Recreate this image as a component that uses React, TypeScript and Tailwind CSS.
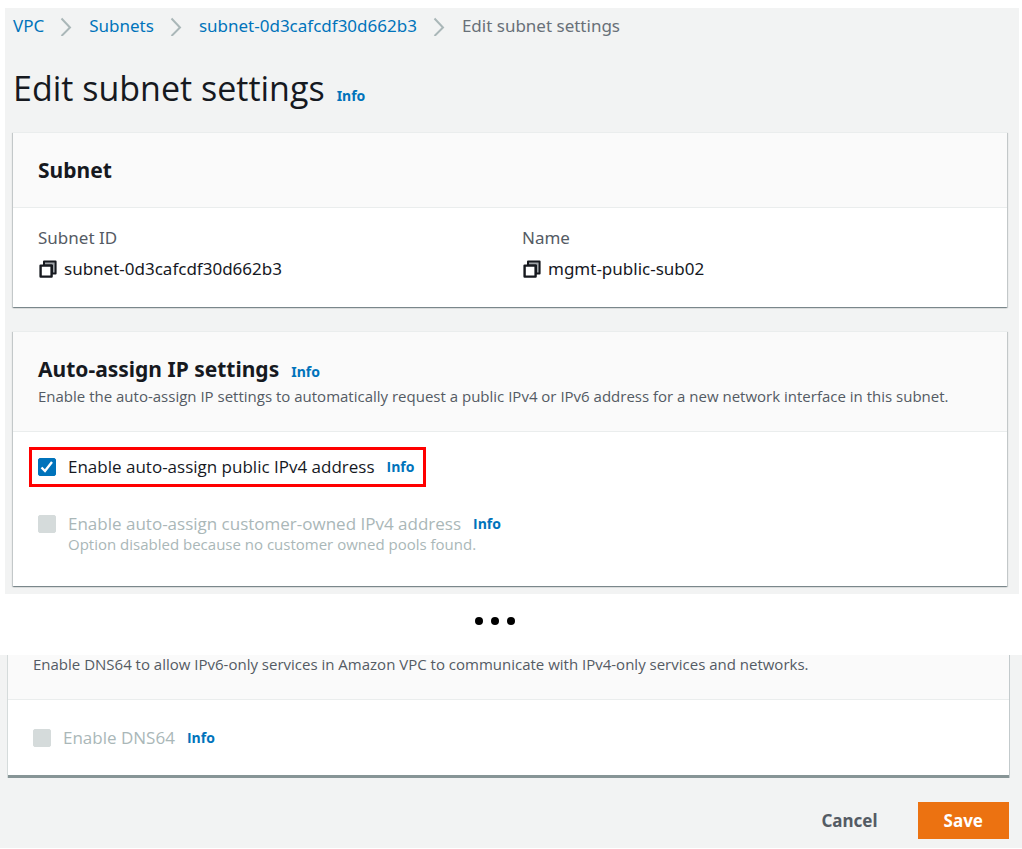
import { useState } from "react";
import type { ReactNode } from "react";

const crumbs = ["VPC", "Subnets", "subnet-0d3cafcdf30d662b3"];

function ChevronIcon() {
  return (
    <svg className="h-5 w-3" viewBox="0 0 12 20" fill="none" stroke="#aab7b8" strokeWidth="2" aria-hidden>
      <path d="M1.5 2.5 10 11.5 1.5 20" />
    </svg>
  );
}

function CopyIcon() {
  return (
    <svg className="h-5 w-5" viewBox="0 0 20 20" fill="none" stroke="#16191f" aria-hidden>
      <path d="M6 2.6H17.6V14.4H14V6.6H6z" fill="#a0a4a8" strokeWidth="2" strokeLinejoin="round" />
      <path d="M2.6 6.6H13.6V17.6H2.6z" fill="#fff" strokeWidth="2.4" strokeLinejoin="round" />
    </svg>
  );
}

function InfoLink() {
  return (
    <a href="#info" className="text-[14px] leading-5 font-bold text-[#0073bb] hover:underline">
      Info
    </a>
  );
}

interface CheckboxProps {
  id: string;
  label: string;
  checked?: boolean;
  disabled?: boolean;
  onChange?: (checked: boolean) => void;
}

/** Checkbox with its label and the info link that follows it. */
function Checkbox({ id, label, checked = false, disabled, onChange }: CheckboxProps) {
  return (
    <div className="flex items-center gap-3 font-['Open_Sans',sans-serif]">
      <span className="grid">
        <input
          id={id}
          type="checkbox"
          checked={checked}
          disabled={disabled}
          onChange={(e) => onChange?.(e.target.checked)}
          className="peer col-start-1 row-start-1 size-[18px] appearance-none rounded-xs border border-[#687078] bg-white checked:border-[#0073bb] checked:bg-[#0073bb] disabled:border-[#d5dbdb] disabled:bg-[#d5dbdb]"
        />
        <svg
          className="pointer-events-none invisible col-start-1 row-start-1 size-[18px] peer-checked:visible"
          viewBox="0 0 18 18"
          fill="none"
          stroke="#fff"
          strokeWidth="2.4"
          aria-hidden
        >
          <path d="M3.5 9.5 7 13 14 4" />
        </svg>
      </span>
      <label htmlFor={id} className={disabled ? "text-[#aab7b8]" : "text-[#16191f]"}>
        {label}
      </label>
      <InfoLink />
    </div>
  );
}

function CopyField({ label, value }: { label: string; value: string }) {
  return (
    <div>
      <dt className="text-[#545b64]">{label}</dt>
      <dd className="mt-[7px] flex items-center gap-1.5">
        <button type="button" aria-label={`Copy ${label}`}>
          <CopyIcon />
        </button>
        {value}
      </dd>
    </div>
  );
}

function Card({ header, children }: { header: ReactNode; children: ReactNode }) {
  return (
    <section className="border-t border-[#eaeded] bg-white shadow-[0_1px_1px_0_rgba(0,28,36,0.3),1px_1px_1px_0_rgba(0,28,36,0.15),-1px_1px_1px_0_rgba(0,28,36,0.15)]">
      <div className="border-b border-[#eaeded] bg-[#fafafa] p-[25px]">{header}</div>
      {children}
    </section>
  );
}

export default function App() {
  const [autoAssign, setAutoAssign] = useState(true);

  return (
    <div className="bg-white pt-2 font-['Noto_Sans',sans-serif] text-[17px] leading-6 text-[#16191f]">
      <main className="mr-[3px] ml-[5px] bg-[#f2f3f3] px-2 pb-2">
        <nav aria-label="Breadcrumb" className="pt-1.5">
          <ol className="flex items-center gap-[17px]">
            {crumbs.map((crumb) => (
              <li key={crumb} className="flex items-center gap-4">
                <a href="#crumb" className="text-[#0073bb] hover:underline">
                  {crumb}
                </a>
                <ChevronIcon />
              </li>
            ))}
            <li className="text-[#687078]" aria-current="page">
              Edit subnet settings
            </li>
          </ol>
        </nav>

        <div className="flex items-baseline gap-3 pt-[30px] pb-6">
          <h1 className="font-['Open_Sans',sans-serif] text-[34px] leading-10">Edit subnet settings</h1>
          <InfoLink />
        </div>

        <div className="flex flex-col gap-6 pr-1">
          <Card header={<h2 className="text-[21px] leading-6 font-bold">Subnet</h2>}>
            <dl className="grid grid-cols-2 gap-6 px-[25px] pt-[18px] pb-[26px]">
              <CopyField label="Subnet ID" value="subnet-0d3cafcdf30d662b3" />
              <CopyField label="Name" value="mgmt-public-sub02" />
            </dl>
          </Card>

          <Card
            header={
              <>
                <div className="flex items-baseline gap-3">
                  <h2 className="text-[21px] leading-6 font-bold">Auto-assign IP settings</h2>
                  <InfoLink />
                </div>
                <p className="mt-1 font-['Open_Sans',sans-serif] text-[15px] leading-5 text-[#545b64]">
                  Enable the auto-assign IP settings to automatically request a public IPv4 or IPv6 address for a
                  new network interface in this subnet.
                </p>
              </>
            }
          >
            <div className="px-4 pt-[15px] pb-[34px]">
              <div className="w-fit border-3 border-[#ff0000] py-[5px] pr-[9px] pl-[6px]">
                <Checkbox
                  id="public-ipv4"
                  label="Enable auto-assign public IPv4 address"
                  checked={autoAssign}
                  onChange={setAutoAssign}
                />
              </div>
              <div className="mt-[25px] pl-[9px]">
                <Checkbox id="customer-ipv4" label="Enable auto-assign customer-owned IPv4 address" disabled />
                <p className="pl-[30px] font-['Open_Sans',sans-serif] text-[15px] leading-4 text-[#aab7b8]">
                  Option disabled because no customer owned pools found.
                </p>
              </div>
            </div>
          </Card>
        </div>
      </main>

      <div className="flex h-[61px] items-center justify-center gap-2 pr-8 pb-2" aria-hidden>
        <span className="size-2 rounded-full bg-black" />
        <span className="size-2 rounded-full bg-black" />
        <span className="size-2 rounded-full bg-black" />
      </div>

      <div className="bg-[#f2f3f3] pr-[13px] pb-[9px] pl-2">
        <section className="border-b-3 border-[#879596] bg-white shadow-[1px_0_0_0_#c3cacc,-1px_0_0_0_#d5dbdb]">
          <p className="border-b border-[#eaeded] bg-[#fafafa] px-[25px] pb-[26px] font-['Open_Sans',sans-serif] text-[15px] leading-[18px] text-[#545b64]">
            Enable DNS64 to allow IPv6-only services in Amazon VPC to communicate with IPv4-only services and
            networks.
          </p>
          <div className="px-[25px] pt-[26px] pb-[25px]">
            <Checkbox id="dns64" label="Enable DNS64" disabled />
          </div>
        </section>
        <div className="mt-6 flex justify-end gap-3.5 font-bold">
          <button type="button" className="h-[37px] px-[26px] text-[#545b64]">
            Cancel
          </button>
          <button type="button" className="h-[37px] bg-[#ec7211] px-[26px] text-white">
            Save
          </button>
        </div>
      </div>
    </div>
  );
}
